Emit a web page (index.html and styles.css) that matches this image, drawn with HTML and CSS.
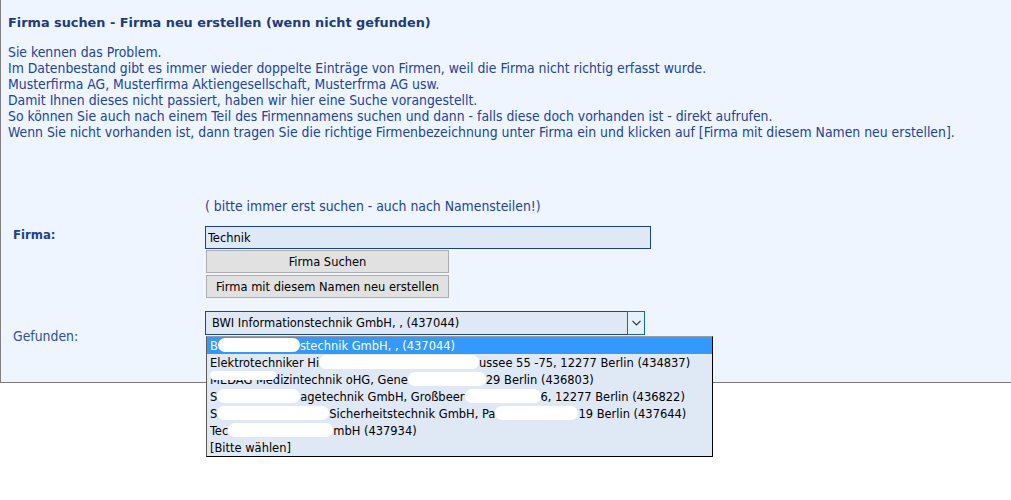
FILE: index.html
```html
<!DOCTYPE html>
<html lang="de">
<head>
<meta charset="utf-8">
<title>Firma suchen</title>
<link rel="stylesheet" href="styles.css">
</head>
<body>
<div class="panel">
  <h1 class="title">Firma suchen - Firma neu erstellen (wenn nicht gefunden)</h1>
  <p class="intro">Sie kennen das Problem.<br>
Im Datenbestand gibt es immer wieder doppelte Einträge von Firmen, weil die Firma nicht richtig erfasst wurde.<br>
Musterfirma AG, Musterfirma Aktiengesellschaft, Musterfrma AG usw.<br>
Damit Ihnen dieses nicht passiert, haben wir hier eine Suche vorangestellt.<br>
So können Sie auch nach einem Teil des Firmennamens suchen und dann - falls diese doch vorhanden ist - direkt aufrufen.<br>
Wenn Sie nicht vorhanden ist, dann tragen Sie die richtige Firmenbezeichnung unter Firma ein und klicken auf [Firma mit diesem Namen neu erstellen].</p>
  <div class="form">
    <span></span>
    <div class="hint">( bitte immer erst suchen - auch nach Namensteilen!)</div>

    <label class="lbl lbl-bold">Firma:</label>
    <div class="controls">
      <input class="text-input" type="text" value="Technik">
      <button class="btn" type="button">Firma Suchen</button>
      <button class="btn btn-gap" type="button">Firma mit diesem Namen neu erstellen</button>
    </div>

    <label class="lbl lbl-found">Gefunden:</label>
    <div class="select-wrap">
      <div class="select">
        <span class="select-value">BWI Informationstechnik GmbH, , (437044)</span>
        <span class="arrow"><svg width="9" height="6" viewBox="0 0 9 6"><path d="M0.5 0.8 L4.5 4.8 L8.5 0.8" fill="none" stroke="#333" stroke-width="1.2"/></svg></span>
      </div>
      <ul class="list">
        <li class="item selected">B<span class="blob w82"></span>stechnik GmbH, , (437044)</li>
        <li class="item">Elektrotechniker Hi<span class="blob w160"></span>ussee 55 -75, 12277 Berlin (434837)</li>
        <li class="item"><span class="cover c66"></span>MEDAG Medizintechnik oHG, Gene<span class="blob w78"></span>29 Berlin (436803)</li>
        <li class="item">S<span class="blob w83"></span>agetechnik GmbH, Großbeer<span class="blob w76"></span>6, 12277 Berlin (436822)</li>
        <li class="item">S<span class="blob w112"></span>Sicherheitstechnik GmbH, Pa<span class="blob w83"></span>19 Berlin (437644)</li>
        <li class="item">Tec<span class="blob w105"></span>mbH (437934)</li>
        <li class="item">[Bitte wählen]</li>
      </ul>
    </div>
  </div>
</div>
</body>
</html>
```
FILE: styles.css
```css
html, body {
  margin: 0;
  padding: 0;
  background: #ffffff;
}

body {
  min-height: 100vh;
  font-family: "DejaVu Sans Condensed", "DejaVu Sans", Verdana, sans-serif;
  font-stretch: condensed;
  font-size: 13.85px;
  line-height: 16px;
}

.panel {
  box-sizing: border-box;
  height: 383px;
  background: #eef5ff;
  border-left: 1px solid #808080;
  border-bottom: 1px solid #7a7a7a;
  padding: 15px 0 0 7px;
  color: #2242a0;
}

.title {
  margin: 0;
  font-family: "DejaVu Sans", Verdana, sans-serif;
  font-stretch: normal;
  font-size: 12.85px;
  line-height: 16px;
  font-weight: bold;
  color: #1f3b80;
}

.intro {
  margin: 13px 0 0 0;
}

.form {
  display: grid;
  grid-template-columns: 197px 1fr;
  margin-top: 58px;
}

.hint {
  margin-bottom: 12px;
}

.lbl {
  padding-left: 5px;
  padding-top: 1px;
}

.lbl-bold {
  font-size: 13px;
  font-weight: bold;
  color: #1f3f9a;
}

.lbl-found {
  padding-top: 30px;
  color: #2a4db0;
}

.controls {
  display: flex;
  flex-direction: column;
  align-items: flex-start;
}

.text-input {
  box-sizing: border-box;
  width: 446px;
  height: 23px;
  margin: 0;
  padding: 0 2px;
  border: 1px solid #1b3f90;
  background: #dfe8f5;
  font: inherit;
  font-size: 12.75px;
  color: #000;
  outline: none;
}

.btn {
  box-sizing: border-box;
  width: 243px;
  height: 23px;
  margin: 1px 0 0 1px;
  padding: 0;
  border: 1px solid #adadad;
  background: #e1e1e1;
  font: inherit;
  font-size: 12.75px;
  color: #000;
}

.btn-gap {
  margin-top: 2px;
}

.select-wrap {
  position: relative;
  margin-top: 13px;
  width: 440px;
  font-size: 12.75px;
}

.select {
  box-sizing: border-box;
  height: 24px;
  border: 1px solid #1b4596;
  background: #dfe8f5;
  color: #000;
  display: flex;
  align-items: center;
  justify-content: space-between;
}

.select-value {
  padding-left: 6px;
}

.arrow {
  box-sizing: border-box;
  width: 18px;
  height: 24px;
  margin: -1px -1px -1px 0;
  border: 1px solid #1863c4;
  background: #e5f1fb;
  display: flex;
  align-items: center;
  justify-content: center;
}

.list {
  position: absolute;
  z-index: 10;
  top: 25px;
  left: 1px;
  box-sizing: border-box;
  width: 507px;
  margin: 0;
  padding: 0;
  list-style: none;
  background: #dfe8f5;
  border: 1px solid #000;
  border-top-color: #9a9a9a;
  border-left-color: #5a5a5a;
  color: #000;
}

.item {
  height: 17px;
  line-height: 17px;
  padding-left: 3px;
  white-space: nowrap;
}

.item.selected {
  background: #3399ff;
  color: #fff;
}

.blob {
  display: inline-block;
  height: 14px;
  vertical-align: -2px;
  background: #fff;
  border-radius: 7px;
}

.cover {
  position: relative;
  z-index: 1;
  display: inline-block;
  height: 9px;
  vertical-align: 4px;
  background: #fff;
  border-radius: 5px;
}

.c66 { width: 66px; margin-right: -66px; }

.w76 { width: 76px; }
.w78 { width: 78px; }
.w82 { width: 82px; }
.w83 { width: 83px; }
.w105 { width: 105px; }
.w112 { width: 112px; }
.w160 { width: 160px; }
```
